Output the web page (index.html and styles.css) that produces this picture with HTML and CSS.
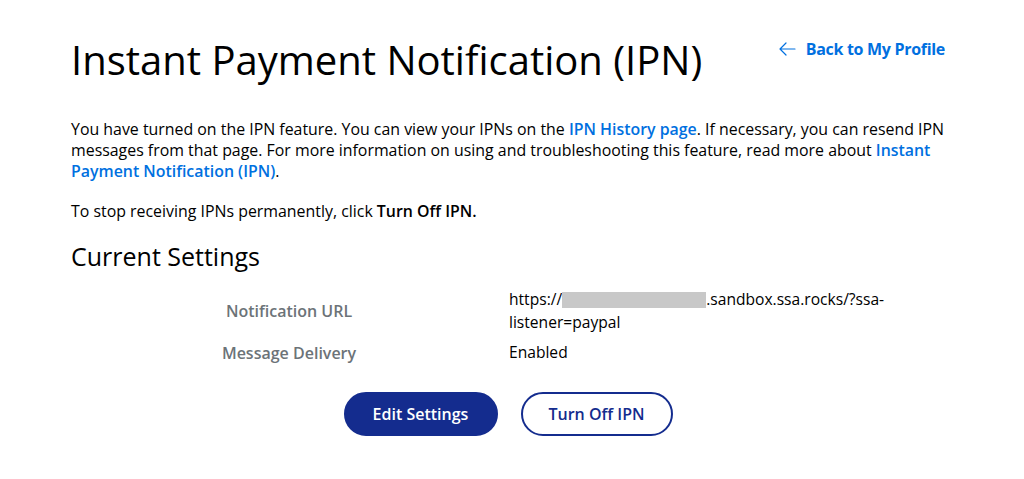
FILE: index.html
```html
<!DOCTYPE html>
<html lang="en">
<head>
<meta charset="utf-8">
<title>Instant Payment Notification (IPN)</title>
<link rel="stylesheet" href="styles.css">
</head>
<body>
<main class="page">
  <header class="head">
    <h1 class="title">Instant Payment Notification (IPN)</h1>
    <a class="back" href="#"><svg class="back-icon" width="17" height="14" viewBox="0 0 17 14" aria-hidden="true"><path d="M7 1 1 7l6 6M1 7h15" fill="none" stroke="currentColor" stroke-width="1.2" stroke-linecap="round" stroke-linejoin="round"/></svg>Back to My Profile</a>
  </header>
  <p class="text">You have turned on the IPN feature. You can view your IPNs on the <a class="link" href="#">IPN History page</a>. If necessary, you can resend IPN messages from that page. For more information on using and troubleshooting this feature, read more about <a class="link" href="#">Instant Payment Notification (IPN)</a>.</p>
  <p class="text">To stop receiving IPNs permanently, click <strong class="strong">Turn Off IPN.</strong></p>
  <h2 class="subtitle">Current Settings</h2>
  <div class="settings">
    <div class="label">Notification URL</div>
    <div class="value">https://<span class="redact"></span>.sandbox.ssa.rocks/?ssa-listener=paypal</div>
    <div class="label">Message Delivery</div>
    <div class="value">Enabled</div>
  </div>
  <div class="actions">
    <button class="btn btn-primary" type="button">Edit Settings</button>
    <button class="btn btn-secondary" type="button">Turn Off IPN</button>
  </div>
</main>
</body>
</html>
```

FILE: styles.css
```css
* { box-sizing: border-box; }
html, body { margin: 0; background: #fff; }
body {
  font-family: "Open Sans", "Noto Sans", "Liberation Sans", sans-serif;
  color: #000;
  font-size: 15.9px;
}
.page {
  width: 876px;
  margin-left: 71px;
  padding-top: 28px;
}
.head {
  display: flex;
  justify-content: space-between;
  align-items: flex-start;
  padding-right: 2px;
}
.title {
  margin: 0;
  font-size: 40px;
  font-weight: 400;
  line-height: 64px;
}
.back {
  display: flex;
  align-items: center;
  gap: 10px;
  margin-top: 10px;
  color: #0070e0;
  font-weight: 700;
  font-size: 16px;
  letter-spacing: -0.3px;
  text-decoration: none;
}
.back-icon { display: block; }
.text {
  margin: 27px 0 0;
  line-height: 21px;
}
.text + .text { margin-top: 19px; }
.link { color: #0070e0; font-weight: 600; text-decoration: none; }
.strong { font-weight: 600; }
.subtitle {
  margin: 16px 0 0;
  font-size: 25px;
  font-weight: 400;
  line-height: 36px;
}
.settings {
  display: grid;
  grid-template-columns: 436px 1fr;
  row-gap: 7px;
  margin-top: 14px;
  align-items: center;
}
.label {
  text-align: center;
  color: #6c7378;
  font-weight: 600;
  font-size: 16px;
}
.value {
  padding-left: 2px;
  padding-right: 40px;
  line-height: 23px;
  font-weight: 500;
  font-size: 15.6px;
}
.redact {
  display: inline-block;
  width: 144px;
  height: 16px;
  background: #c8c8c8;
  vertical-align: -3px;
}
.actions {
  display: flex;
  justify-content: center;
  gap: 23px;
  margin-top: 28px;
  padding-right: 2px;
}
.btn {
  height: 44px;
  border-radius: 22px;
  font-family: inherit;
  font-size: 16px;
  font-weight: 600;
  cursor: pointer;
}
.btn-primary {
  width: 154px;
  background: #142c8e;
  color: #fff;
  border: 2px solid #142c8e;
}
.btn-secondary {
  width: 152px;
  background: #fff;
  color: #142c8e;
  border: 2px solid #142c8e;
}
```
